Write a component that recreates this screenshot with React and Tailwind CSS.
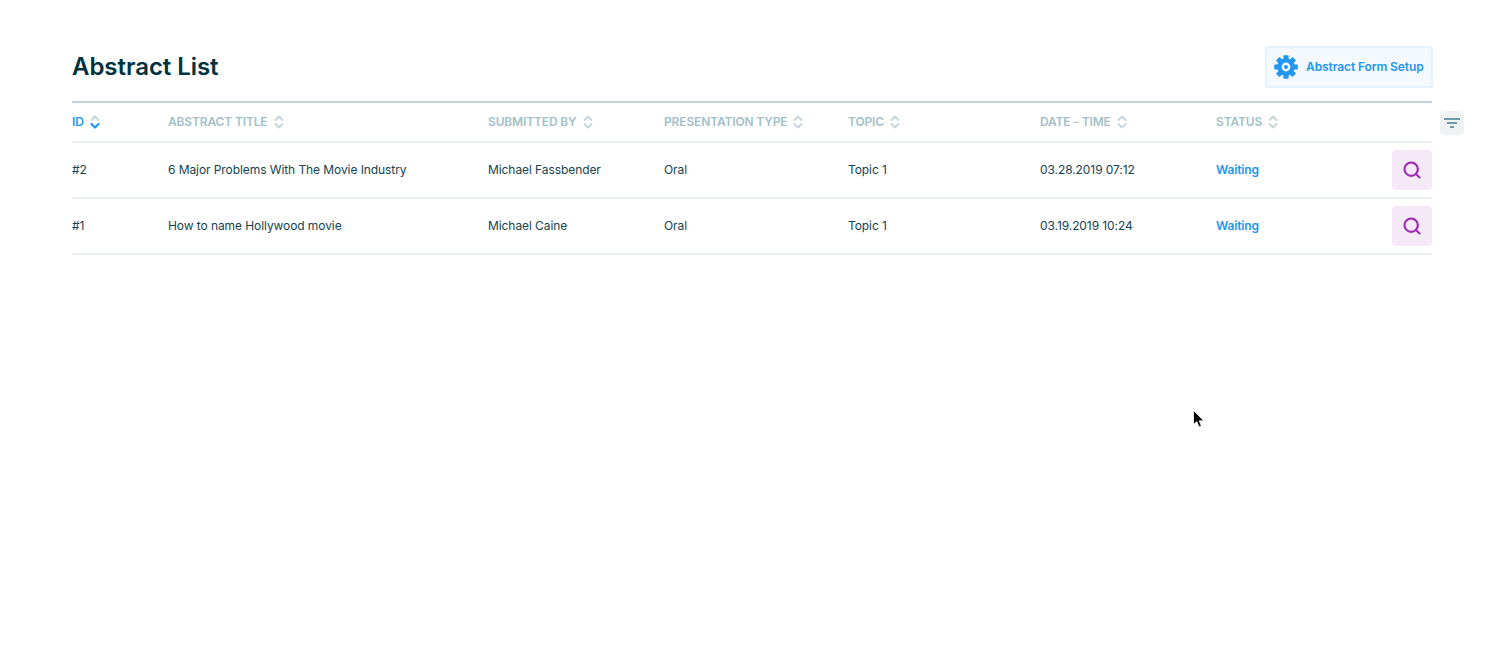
import React from 'react';
import { Search } from 'lucide-react';

const font = { fontFamily: 'Inter, sans-serif' };

const columns = [
  { label: 'ID', active: true },
  { label: 'Abstract Title' },
  { label: 'Submitted By' },
  { label: 'Presentation Type' },
  { label: 'Topic' },
  { label: 'Date - Time' },
  { label: 'Status' },
];

const rows = [
  { id: '#2', title: '6 Major Problems With The Movie Industry', by: 'Michael Fassbender', type: 'Oral', topic: 'Topic 1', date: '03.28.2019 07:12', status: 'Waiting' },
  { id: '#1', title: 'How to name Hollywood movie', by: 'Michael Caine', type: 'Oral', topic: 'Topic 1', date: '03.19.2019 10:24', status: 'Waiting' },
];

const gridCols = 'grid grid-cols-[96px_320px_176px_184px_192px_176px_176px_40px] items-center';

function SortIcon({ active }) {
  return (
    <svg width="10" height="14" viewBox="0 0 10 14" fill="none" strokeWidth="1.8" strokeLinecap="round" strokeLinejoin="round" className="ml-[6px] shrink-0">
      <path d="M1.5 5 L5 1.5 L8.5 5" stroke="#c3d5da" />
      <path d="M1.5 9 L5 12.5 L8.5 9" stroke={active ? '#2196f3' : '#c3d5da'} strokeWidth={active ? 2.2 : 1.8} />
    </svg>
  );
}

function GearIcon() {
  return (
    <svg width="24" height="24" viewBox="0 0 24 24" className="shrink-0">
      <g fill="#2196f3">
        <rect x="9.4" y="0.2" width="5.2" height="23.6" rx="0.8" />
        <rect x="9.4" y="0.2" width="5.2" height="23.6" rx="0.8" transform="rotate(45 12 12)" />
        <rect x="9.4" y="0.2" width="5.2" height="23.6" rx="0.8" transform="rotate(90 12 12)" />
        <rect x="9.4" y="0.2" width="5.2" height="23.6" rx="0.8" transform="rotate(135 12 12)" />
        <circle cx="12" cy="12" r="8.8" />
      </g>
      <circle cx="12" cy="12" r="4.4" fill="#f4f9fe" />
      <circle cx="12" cy="12" r="2" fill="#2196f3" />
    </svg>
  );
}

export default function App() {
  return (
    <div className="relative min-h-[646px] bg-white pl-[72px] pr-[53px] pt-[46px] text-[#14434f]" style={font}>
      <div className="flex items-center justify-between h-[42px] mb-[13px]">
        <h1 className="text-[24px] leading-none font-semibold tracking-[-0.05px] -mt-[1px] text-[#00333f]">Abstract List</h1>
        <button className="flex items-center h-[42px] w-[168px] -mr-px pl-[7px] gap-[8px] rounded-[4px] border-2 border-[#e3f2fd] bg-[#f4f9fe] text-[12px] font-semibold tracking-[-0.1px] text-[#2196f3]">
          <GearIcon />
          <span>Abstract Form Setup</span>
        </button>
      </div>

      <div className="border-t-2 border-[#c3d5da]">
        <div className={`${gridCols} h-[40px] border-b-2 border-[#edf2f2] text-[12px] font-semibold uppercase tracking-[-0.14px]`}>
          {columns.map((col) => (
            <div key={col.label} className={`flex items-center ${col.active ? 'text-[#2196f3]' : 'text-[#a3c0c7]'}`}>
              <span>{col.label}</span>
              <SortIcon active={col.active} />
            </div>
          ))}
        </div>

        {rows.map((row) => (
          <div key={row.id} className={`${gridCols} h-[56px] border-b-2 border-[#edf2f2] text-[12px] tracking-[-0.08px]`}>
            <div>{row.id}</div>
            <div>{row.title}</div>
            <div>{row.by}</div>
            <div>{row.type}</div>
            <div>{row.topic}</div>
            <div>{row.date}</div>
            <div className="font-semibold tracking-[-0.14px] text-[#2196f3]">{row.status}</div>
            <button className="flex items-center justify-center w-[40px] h-[40px] rounded-[4px] bg-[#f5e8f7]">
              <Search size={20} strokeWidth={2.5} color="#9c27b0" />
            </button>
          </div>
        ))}
      </div>

      {/* floating filter toggle, hangs off the right of the table */}
      <button className="absolute left-[1440px] top-[111px] flex items-center justify-center w-[24px] h-[24px] rounded-[4px] bg-[#eff3f4]">
        <svg width="16" height="10" viewBox="0 0 16 10">
          <rect x="0" y="0" width="16" height="2" fill="#6f9aa5" />
          <rect x="3" y="4" width="10" height="2" fill="#6f9aa5" />
          <rect x="6" y="8" width="4" height="2" fill="#6f9aa5" />
        </svg>
      </button>

      {/* mouse pointer captured in the shot */}
      <svg width="12" height="19" viewBox="0 0 12 19" className="absolute left-[1193px] top-[410px]">
        <path d="M0.5 0.5 L0.5 14.5 L3.8 11.6 L6 17 L8.4 16 L6.2 10.8 L10.8 10.8 Z" fill="#000" stroke="#fff" strokeWidth="0.8" />
      </svg>
    </div>
  );
}
